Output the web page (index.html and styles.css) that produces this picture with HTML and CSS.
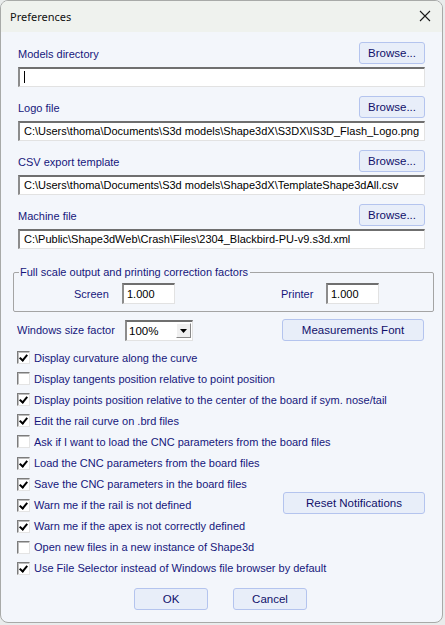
FILE: index.html
```html
<!DOCTYPE html>
<html>
<head>
<meta charset="utf-8">
<link rel="stylesheet" href="styles.css">
</head>
<body>
<div class="window">
  <div class="titlebar">
    <span class="title">Preferences</span>
    <svg class="close" width="12" height="12" viewBox="0 0 12 12"><path d="M1 1L11 11M11 1L1 11" stroke="#1a1a1a" stroke-width="1.1" fill="none"/></svg>
  </div>
  <div class="content">
    <div class="field">
      <div class="field-head"><span class="label">Models directory</span><button class="btn browse">Browse...</button></div>
      <div class="input"><span class="caret"></span></div>
    </div>
    <div class="field">
      <div class="field-head"><span class="label">Logo file</span><button class="btn browse">Browse...</button></div>
      <div class="input">C:\Users\thoma\Documents\S3d models\Shape3dX\S3DX\IS3D_Flash_Logo.png</div>
    </div>
    <div class="field">
      <div class="field-head"><span class="label">CSV export template</span><button class="btn browse">Browse...</button></div>
      <div class="input">C:\Users\thoma\Documents\S3d models\Shape3dX\TemplateShape3dAll.csv</div>
    </div>
    <div class="field">
      <div class="field-head"><span class="label">Machine file</span><button class="btn browse">Browse...</button></div>
      <div class="input">C:\Public\Shape3dWeb\Crash\Files\2304_Blackbird-PU-v9.s3d.xml</div>
    </div>

    <fieldset class="group">
      <legend>Full scale output and printing correction factors</legend>
      <div class="group-row">
        <span class="label screen-label">Screen</span>
        <div class="input small">1.000</div>
        <span class="label printer-label">Printer</span>
        <div class="input small">1.000</div>
      </div>
    </fieldset>

    <div class="size-row">
      <span class="label">Windows size factor</span>
      <div class="combo"><span class="combo-val">100%</span><span class="combo-btn"><svg width="7" height="4" viewBox="0 0 7 4"><path d="M0 0H7L3.5 4Z" fill="#000"/></svg></span></div>
      <button class="btn wide">Measurements Font</button>
    </div>

    <div class="checks">
      <label class="check"><span class="box on"></span>Display curvature along the curve</label>
      <label class="check"><span class="box"></span>Display tangents position relative to point position</label>
      <label class="check"><span class="box on"></span>Display points position relative to the center of the board if sym. nose/tail</label>
      <label class="check"><span class="box on"></span>Edit the rail curve on .brd files</label>
      <label class="check"><span class="box"></span>Ask if I want to load the CNC parameters from the board files</label>
      <label class="check"><span class="box on"></span>Load the CNC parameters from the board files</label>
      <label class="check"><span class="box on"></span>Save the CNC parameters in the board files</label>
      <label class="check r8"><span class="box on"></span>Warn me if the rail is not defined</label>
      <button class="btn wide reset">Reset Notifications</button>
      <label class="check"><span class="box on"></span>Warn me if the apex is not correctly defined</label>
      <label class="check"><span class="box"></span>Open new files in a new instance of Shape3d</label>
      <label class="check"><span class="box on"></span>Use File Selector instead of Windows file browser by default</label>
    </div>

    <div class="actions">
      <button class="btn action">OK</button>
      <button class="btn action">Cancel</button>
    </div>
  </div>
</div>
</body>
</html>
```
FILE: styles.css
```css
html, body {
  margin: 0;
  padding: 0;
  background: #e9ecec;
}
body {
  width: 445px;
  height: 625px;
  overflow: hidden;
}
.window {
  box-sizing: border-box;
  width: 443px;
  height: 623px;
  border: 1px solid #a8aaa8;
  border-radius: 8px;
  overflow: hidden;
  background: #f3f6fb;
}
.titlebar {
  height: 31px;
  background: #eff2ee;
  display: flex;
  align-items: center;
  justify-content: space-between;
  padding: 0 11px 0 9px;
}
.title {
  font-family: "Noto Sans", sans-serif;
  font-size: 11px;
  color: #111;
  margin-top: -1px;
}
.close {
  margin-top: -1px;
}
.content {
  padding: 10px 17px 0 16px;
  font-family: "Liberation Sans", Arial, sans-serif;
  font-size: 11px;
  color: #14147a;
}
.label {
  color: #16167c;
}
.field {
  display: flex;
  flex-direction: column;
  margin-bottom: 9px;
  padding-left: 1px;
}
.field-head {
  display: flex;
  justify-content: space-between;
  align-items: center;
  height: 22px;
}
.field-head .label {
  margin-top: 1px;
}
.btn {
  font-family: "Liberation Sans", Arial, sans-serif;
  font-size: 11.5px;
  color: #10106a;
  background: #e8eef9;
  border: 1px solid #b4c4ee;
  border-radius: 3px;
  padding: 0;
  margin: 0;
  height: 22px;
}
.browse {
  width: 66px;
}
.input {
  margin-top: 3px;
  height: 20px;
  box-sizing: border-box;
  background: #fff;
  border: 1px solid #e2e2e2;
  border-top: 2px solid #6f6f6f;
  border-left: 2px solid #8c8c8c;
  padding: 0 4px;
  color: #000;
  font-size: 11px;
  line-height: 17px;
  white-space: nowrap;
  overflow: hidden;
  width: 407px;
}
.caret {
  display: inline-block;
  width: 1px;
  height: 12px;
  background: #000;
  vertical-align: middle;
  margin-top: -2px;
}
.group {
  margin: 17px 0 0 -4px;
  padding: 5px 0 5px 0;
  border: 1px solid #a4a4a4;
  border-radius: 2px;
  width: 421px;
  box-sizing: border-box;
  height: 46px;
}
.group legend {
  padding: 0 2px 0 1px;
  margin-left: 5px;
  color: #16167c;
  font-size: 11px;
}
.group-row {
  display: flex;
  align-items: center;
}
.screen-label {
  margin-left: 60px;
  width: 48px;
}
.printer-label {
  margin-left: 106px;
  width: 45px;
}
.input.small {
  width: 53px;
  height: 21px;
  margin-top: 0;
  padding-left: 3px;
  line-height: 18px;
}
.size-row {
  display: flex;
  align-items: center;
  margin-top: 7px;
  height: 22px;
}
.size-row .label {
  width: 108px;
}
.combo {
  width: 68px;
  height: 21px;
  box-sizing: border-box;
  background: #fff;
  border: 1px solid #e2e2e2;
  border-top: 2px solid #6f6f6f;
  border-left: 2px solid #8c8c8c;
  display: flex;
  align-items: center;
  justify-content: space-between;
  color: #000;
  font-size: 11.5px;
}
.combo-val {
  padding-left: 2px;
}
.combo-btn {
  width: 15px;
  height: 15px;
  margin-right: 1px;
  background: #f0f0f0;
  border: 1px solid #fff;
  border-right-color: #888;
  border-bottom-color: #888;
  box-sizing: border-box;
  display: flex;
  align-items: center;
  justify-content: center;
}
.wide {
  width: 142px;
  margin-left: auto;
  margin-right: 1px;
}
.checks {
  margin-top: 6px;
  display: grid;
  grid-template-columns: 1fr 142px;
  grid-auto-rows: 21.1px;
}
.check {
  grid-column: 1 / -1;
  display: flex;
  align-items: center;
  color: #16167c;
  white-space: nowrap;
}
.check.r8 {
  grid-row: 8;
}
.reset {
  grid-row: 8;
  grid-column: 2;
  align-self: start;
  margin-top: -3px;
}
.box {
  width: 13px;
  height: 13px;
  box-sizing: border-box;
  background: #fff;
  border: 1px solid #e4e4e4;
  border-top-color: #7c7c7c;
  border-left-color: #7c7c7c;
  box-shadow: inset 1px 1px 0 #bcbcbc;
  margin: 0 4px 0 0;
  position: relative;
  flex: none;
}
.box.on::after {
  content: "";
  position: absolute;
  left: 3px;
  top: 1px;
  width: 3px;
  height: 6px;
  border: solid #000;
  border-width: 0 2px 2px 0;
  transform: rotate(40deg);
}
.actions {
  display: flex;
  justify-content: center;
  gap: 25px;
  margin-top: 9px;
  padding-right: 1px;
}
.action {
  width: 74px;
  height: 22px;
}
```
